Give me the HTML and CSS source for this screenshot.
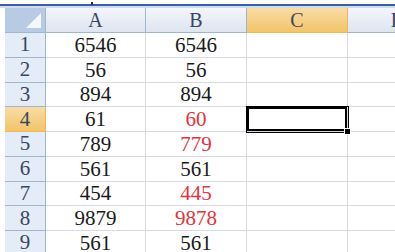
FILE: index.html
```
<!DOCTYPE html>
<html lang="zh-CN">
<head>
  <meta charset="UTF-8" />
  <meta name="viewport" content="width=device-width, initial-scale=1" />
  <title>Sheet1</title>
  <link rel="stylesheet" href="styles.css">
</head>
<body>

  <div class="ribbon-edge"><span class="tick"></span></div>

  <div class="sheet">
    <div class="corner"><span class="tri"></span></div>
    <div class="col-head">A</div>
    <div class="col-head">B</div>
    <div class="col-head selected">C</div>
    <div class="col-head">D</div>

    <div class="row-head">1</div><div class="cell">6546</div><div class="cell">6546</div><div class="cell"></div><div class="cell"></div>
    <div class="row-head">2</div><div class="cell">56</div><div class="cell">56</div><div class="cell"></div><div class="cell"></div>
    <div class="row-head">3</div><div class="cell">894</div><div class="cell">894</div><div class="cell"></div><div class="cell"></div>
    <div class="row-head selected">4</div><div class="cell">61</div><div class="cell diff">60</div><div class="cell active"></div><div class="cell"></div>
    <div class="row-head">5</div><div class="cell">789</div><div class="cell diff">779</div><div class="cell"></div><div class="cell"></div>
    <div class="row-head">6</div><div class="cell">561</div><div class="cell">561</div><div class="cell"></div><div class="cell"></div>
    <div class="row-head">7</div><div class="cell">454</div><div class="cell diff">445</div><div class="cell"></div><div class="cell"></div>
    <div class="row-head">8</div><div class="cell">9879</div><div class="cell diff">9878</div><div class="cell"></div><div class="cell"></div>
    <div class="row-head">9</div><div class="cell">561</div><div class="cell">561</div><div class="cell"></div><div class="cell"></div>
  </div>

</body>
</html>
```

FILE: styles.css
```
body {
  margin: 0;
  background: #fff;
  font-family: 'Liberation Serif', 'DejaVu Serif', serif;
  overflow: hidden;
}
.ribbon-edge {
  position: relative;
  height: 2px;
  margin-top: 4px;
  background: #3b5fa8;
  border-bottom: 2px solid #cfdcef;
}
.tick {
  position: absolute;
  left: 91px;
  top: -2px;
  width: 2px;
  height: 3px;
  background: #333;
}
.sheet {
  display: grid;
  grid-template-columns: 5px 41px 100px 101px 101px 101px;
  grid-auto-rows: 24.75px;
  grid-template-rows: 25px;
  width: 395px;
  overflow: hidden;
}
.sheet > .corner,
.sheet > .row-head {
  grid-column: 2;
}
.corner {
  position: relative;
  background: #b9cbe4;
  border-right: 1px solid #9eb6ce;
  border-bottom: 1px solid #9eb6ce;
}
.tri {
  position: absolute;
  right: 4px;
  bottom: 4px;
  width: 0;
  height: 0;
  border-left: 15px solid transparent;
  border-bottom: 15px solid #f4f7fb;
}
.col-head {
  display: flex;
  align-items: center;
  justify-content: center;
  font-size: 20px;
  color: #3a4660;
  background: linear-gradient(#f3f6fb, #dde5f0);
  border-right: 1px solid #9eb6ce;
  border-bottom: 1px solid #9eb6ce;
}
.row-head {
  display: flex;
  align-items: center;
  justify-content: center;
  font-size: 21px;
  color: #3a4660;
  background: #e4ecf7;
  border-right: 1px solid #9eb6ce;
  border-bottom: 1px solid #9eb6ce;
}
.col-head.selected,
.row-head.selected {
  background: linear-gradient(#f9dca5, #f2c46a);
  border-color: #f2b655;
}
.cell {
  display: flex;
  align-items: center;
  justify-content: center;
  padding-top: 1px;
  font-size: 21px;
  color: #1a1a1a;
  border-right: 1px solid #d6dbe3;
  border-bottom: 1px solid #d6dbe3;
}
.cell.diff {
  color: #e3333d;
}
.cell.active {
  position: relative;
  box-shadow: inset 0 0 0 2px #000;
  outline: 1px solid #000;
  outline-offset: 0;
}
.cell.active::after {
  content: "";
  position: absolute;
  right: -4px;
  bottom: -4px;
  width: 5px;
  height: 5px;
  background: #000;
  border: 1px solid #fff;
}
```
